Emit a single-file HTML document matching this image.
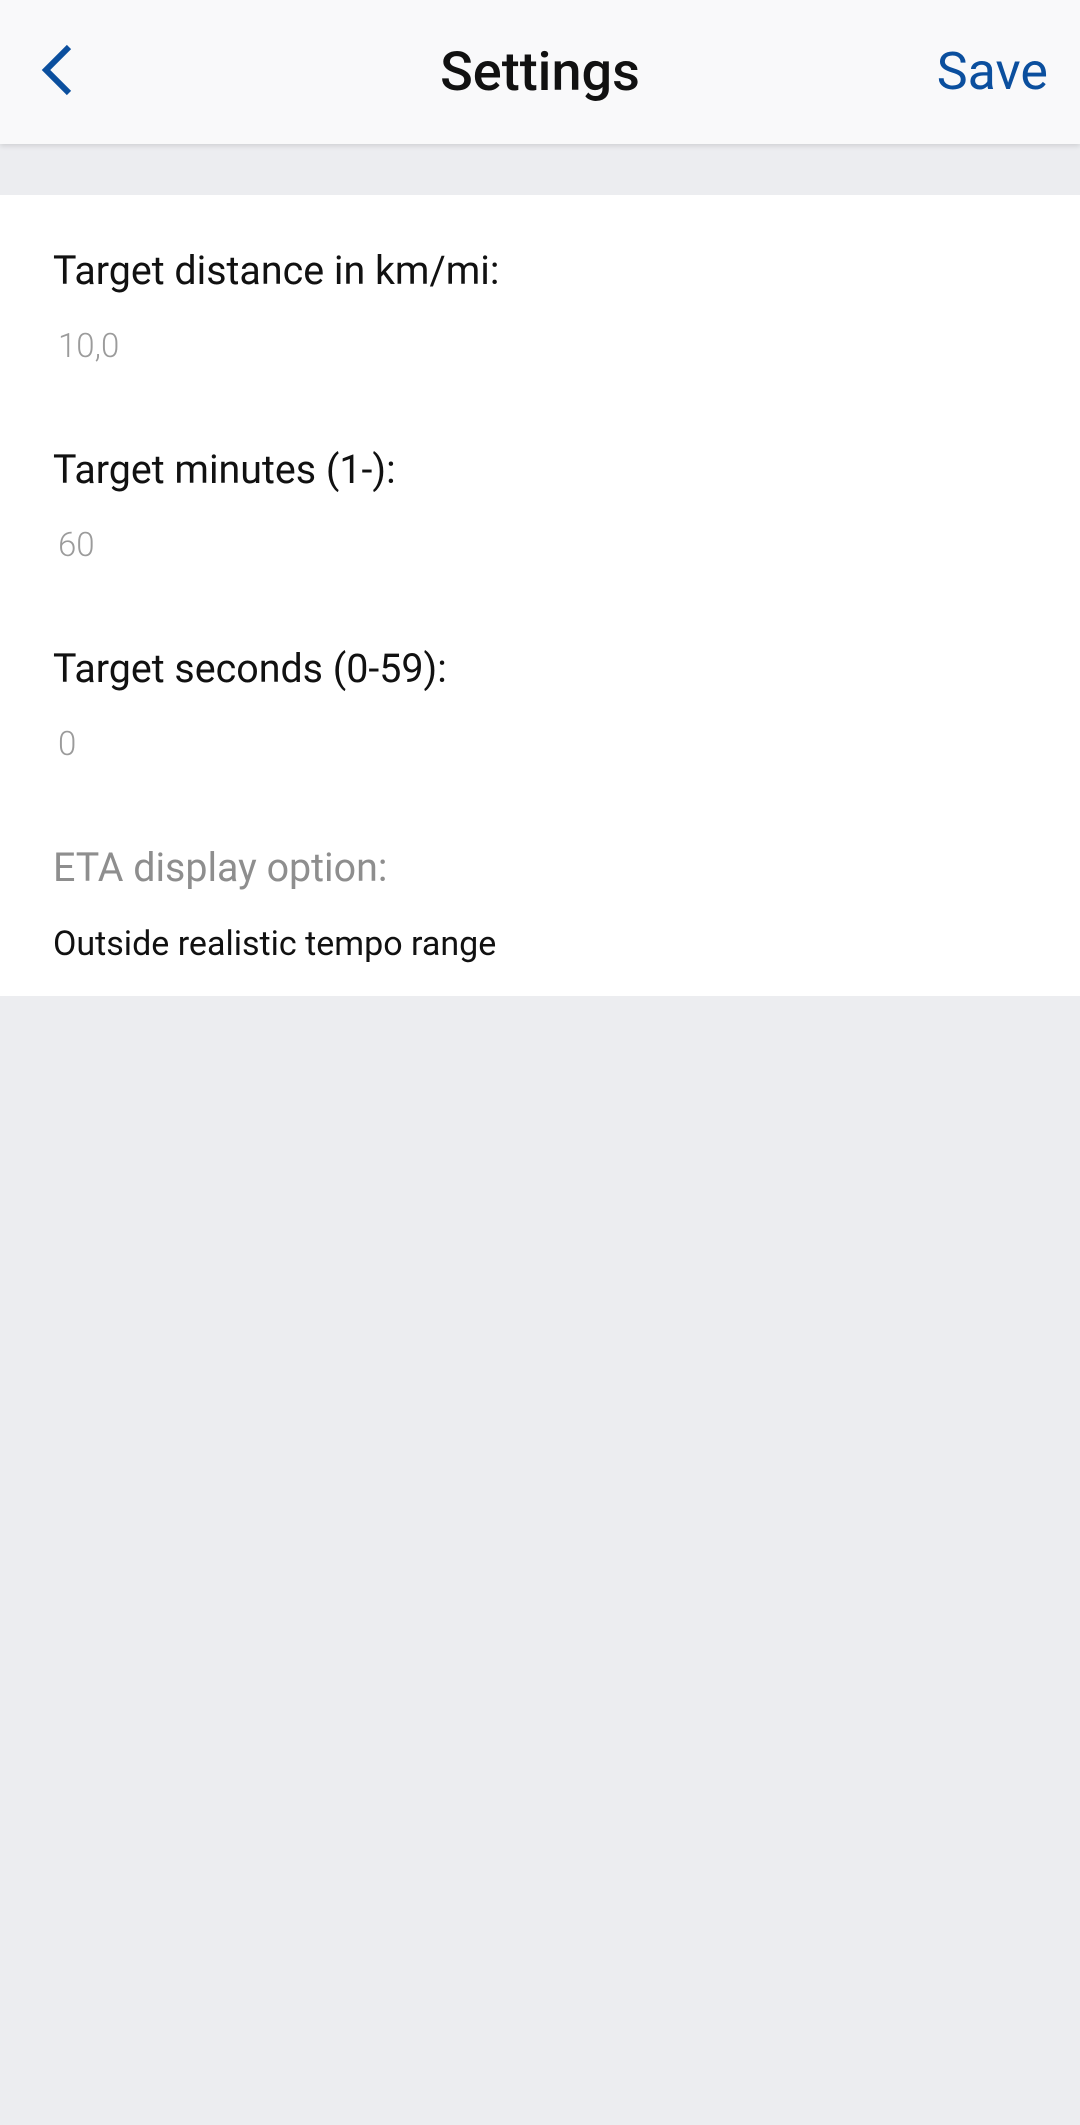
<!DOCTYPE html>
<html><head><meta charset="utf-8"><style>
html,body{margin:0;padding:0;width:1080px;height:2125px;background:#ecedf0;font-family:"Roboto","Liberation Sans",sans-serif;overflow:hidden}
.hdr{position:absolute;left:0;top:0;width:1080px;height:144px;background:#f9f9fa;box-shadow:0 2px 5px rgba(0,0,0,0.12);z-index:2}
.t{position:absolute;white-space:nowrap;line-height:1}
.card{position:absolute;left:0;top:195px;width:1080px;height:801px;background:#fff}
.lbl{font-size:39.4px;color:#111;left:53px}
.val{font-size:33px;color:#9b9b9b;left:58px;font-weight:300}
</style></head><body>
<div class="hdr">
<svg style="position:absolute;left:0;top:0" width="120" height="144"><path d="M69 47 L46 70 L69 93" fill="none" stroke="#0b4f9e" stroke-width="6"/></svg>
<div class="t" style="left:0;width:1080px;text-align:center;top:46px;font-size:54px;font-weight:500;color:#111">Settings</div>
<div class="t" style="right:32px;top:46px;font-size:52px;color:#0b4f9e">Save</div>
</div>
<div class="card"></div>
<div class="t lbl" style="top:251px">Target distance in km/mi:</div>
<div class="t val" style="top:330px">10,0</div>
<div class="t lbl" style="top:450px">Target minutes (1-):</div>
<div class="t val" style="top:529px">60</div>
<div class="t lbl" style="top:649px">Target seconds (0-59):</div>
<div class="t val" style="top:728px">0</div>
<div class="t lbl" style="top:848px;color:#8e8e8e">ETA display option:</div>
<div class="t" style="left:53px;top:927px;font-size:34px;color:#111">Outside realistic tempo range</div>
</body></html>
